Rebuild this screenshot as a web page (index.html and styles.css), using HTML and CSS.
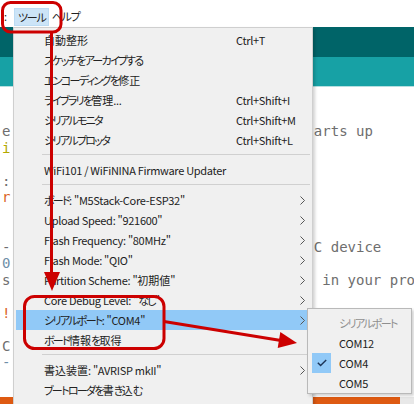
FILE: index.html
```html
<!DOCTYPE html>
<html lang="ja">
<head>
<meta charset="utf-8">
<title>Arduino IDE - ツール menu</title>
<link rel="stylesheet" href="styles.css">
</head>
<body>
<div class="screen">
  <div class="menubar">
    <span class="mb-item mb-cut">:</span>
    <span class="mb-item mb-active ja">ツール</span>
    <span class="mb-item ja">ヘルプ</span>
  </div>
  <div class="toolbar"></div>
  <div class="tabs"></div>
  <div class="editor">
    <div class="line"><span class="head c-blue"> </span></div>
    <div class="line"></div>
    <div class="line"><span class="head">e</span><span class="tail">arts up</span></div>
    <div class="line"><span class="head c-olive">i</span></div>
    <div class="line"></div>
    <div class="line"><span class="head">:</span></div>
    <div class="line"><span class="head c-orange">r</span></div>
    <div class="line"></div>
    <div class="line"></div>
    <div class="line"><span class="head">-</span><span class="tail">C device</span></div>
    <div class="line"><span class="head c-blue">0</span></div>
    <div class="line"><span class="head">s</span><span class="tail"> in your pro</span></div>
    <div class="line"></div>
    <div class="line"><span class="head c-orange">!</span></div>
    <div class="line"></div>
    <div class="line"><span class="head">C</span></div>
    <div class="line"><span class="head c-blue">-</span></div>
    <div class="line"></div>
  </div>
  <div class="status"><span class="status-end"></span></div>

  <div class="menu">
    <div class="mi"><span class="lbl kj">自動整形</span><span class="key">Ctrl+T</span></div>
    <div class="mi"><span class="lbl ja">スケッチをアーカイブする</span></div>
    <div class="mi"><span class="lbl"><span class="ja">エンコーディングを</span><span class="kj">修正</span></span></div>
    <div class="mi"><span class="lbl"><span class="ja">ライブラリを</span><span class="kj">管理</span>...</span><span class="key">Ctrl+Shift+I</span></div>
    <div class="mi"><span class="lbl ja">シリアルモニタ</span><span class="key">Ctrl+Shift+M</span></div>
    <div class="mi"><span class="lbl ja">シリアルプロッタ</span><span class="key">Ctrl+Shift+L</span></div>
    <div class="sep"></div>
    <div class="mi"><span class="lbl">WiFi101 / WiFiNINA Firmware Updater</span></div>
    <div class="sep"></div>
    <div class="mi"><span class="lbl"><span class="ja">ボード</span>: "M5Stack-Core-ESP32"</span><span class="key"></span><svg class="arr" viewBox="0 0 5 9"><polyline points="0.5,0.5 4.5,4.5 0.5,8.5"/></svg></div>
    <div class="mi"><span class="lbl">Upload Speed: "921600"</span><span class="key"></span><svg class="arr" viewBox="0 0 5 9"><polyline points="0.5,0.5 4.5,4.5 0.5,8.5"/></svg></div>
    <div class="mi"><span class="lbl">Flash Frequency: "80MHz"</span><span class="key"></span><svg class="arr" viewBox="0 0 5 9"><polyline points="0.5,0.5 4.5,4.5 0.5,8.5"/></svg></div>
    <div class="mi"><span class="lbl">Flash Mode: "QIO"</span><span class="key"></span><svg class="arr" viewBox="0 0 5 9"><polyline points="0.5,0.5 4.5,4.5 0.5,8.5"/></svg></div>
    <div class="mi"><span class="lbl">Partition Scheme: "<span class="kj">初期値</span>"</span><span class="key"></span><svg class="arr" viewBox="0 0 5 9"><polyline points="0.5,0.5 4.5,4.5 0.5,8.5"/></svg></div>
    <div class="mi"><span class="lbl">Core Debug Level: "<span class="ja">なし</span>"</span><span class="key"></span><svg class="arr" viewBox="0 0 5 9"><polyline points="0.5,0.5 4.5,4.5 0.5,8.5"/></svg></div>
    <div class="mi mi-active"><span class="lbl"><span class="ja">シリアルポート</span>: "COM4"</span><span class="key"></span><svg class="arr" viewBox="0 0 5 9"><polyline points="0.5,0.5 4.5,4.5 0.5,8.5"/></svg></div>
    <div class="mi"><span class="lbl"><span class="ja">ボード</span><span class="kj">情報</span><span class="ja">を</span><span class="kj">取得</span></span></div>
    <div class="sep"></div>
    <div class="mi"><span class="lbl"><span class="kj">書込装置</span>: "AVRISP mkII"</span><span class="key"></span><svg class="arr" viewBox="0 0 5 9"><polyline points="0.5,0.5 4.5,4.5 0.5,8.5"/></svg></div>
    <div class="mi"><span class="lbl"><span class="ja">ブートローダを</span><span class="kj">書</span><span class="ja">き</span><span class="kj">込</span><span class="ja">む</span></span></div>
  </div>

  <div class="submenu">
    <div class="si si-title"><span class="chk"></span><span class="slbl ja">シリアルポート</span></div>
    <div class="si"><span class="chk"></span><span class="slbl">COM12</span></div>
    <div class="si"><span class="chk chk-on"><svg viewBox="0 0 10 8"><polyline points="0.8,3.8 3.6,6.6 9.2,1"/></svg></span><span class="slbl">COM4</span></div>
    <div class="si"><span class="chk"></span><span class="slbl">COM5</span></div>
  </div>

  <svg class="marks" viewBox="0 0 414 404">
    <rect x="2.5" y="2.5" width="58.5" height="29.5" rx="8"/>
    <line x1="51.5" y1="33" x2="51.5" y2="274"/>
    <polygon points="44,272 60,272 52,291"/>
    <rect x="24.5" y="296.5" width="139.5" height="52" rx="10"/>
    <line x1="164" y1="321.5" x2="281" y2="340.5"/>
    <polygon points="297,343 280.3,332.1 277.7,347.9"/>
  </svg>
</div>
</body>
</html>
```

FILE: styles.css
```css
* { box-sizing: border-box; }

html, body {
  margin: 0;
  padding: 0;
  background: #ffffff;
}

.screen {
  position: relative;
  width: 414px;
  height: 404px;
  overflow: hidden;
  font-family: "Noto Sans CJK JP", "Noto Sans", sans-serif;
  font-feature-settings: "palt";
  color: #222;
}

/* Japanese runs: condensed kana, full-width kanji */
.ja {
  letter-spacing: -1.7px;
}
.kj {
  letter-spacing: 0;
}

/* menu bar */
.menubar {
  height: 27px;
  background: #ffffff;
  display: flex;
  align-items: flex-start;
  padding-top: 8px;
  font-size: 11px;
}
.menubar .ja {
  letter-spacing: -1.2px;
}
.mb-item {
  height: 18px;
  line-height: 17px;
  padding: 0 2px;
}
.mb-cut {
  width: 14px;
  padding-left: 4px;
}
.mb-active {
  padding: 0 2px 0 3px;
  margin-right: 1px;
  background: #cce4f7;
  border: 1px solid #bcdcf4;
}

/* IDE background */
.toolbar {
  height: 30px;
  background: #006468;
}
.tabs {
  height: 30px;
  background: #17a1a5;
  border-bottom: 1px solid #b6dfe0;
}
.editor {
  height: 310px;
  padding: 3px 0 0 2px;
  overflow: hidden;
  font-family: "DejaVu Sans Mono", monospace;
  font-size: 14px;
  color: #6e6e6e;
  font-feature-settings: normal;
}
.line {
  height: 16.5px;
  line-height: 16.5px;
  white-space: pre;
  display: grid;
  grid-template-columns: 37ch auto;
}
.head { grid-column: 1; }
.tail { grid-column: 2; }
.c-blue { color: #6f8fa8; }
.c-olive { color: #b3a800; }
.c-orange { color: #d9631e; }

.status {
  height: 10px;
  background: #de5a12;
  display: flex;
  justify-content: flex-end;
}
.status-end {
  width: 14px;
  background: #e8e8e8;
}

/* dropdown menu */
.menu {
  position: absolute;
  left: 13px;
  top: 27px;
  width: 300px;
  height: 390px;
  background: #f0f0f0;
  border: 1px solid #cfcfcf;
  box-shadow: 2px 2px 3px rgba(0, 0, 0, 0.18);
  padding-top: 2px;
  font-size: 11px;
  letter-spacing: -0.3px;
  display: flex;
  flex-direction: column;
}
.mi {
  height: 20px;
  margin: 0 2px;
  padding-left: 28px;
  display: grid;
  grid-template-columns: 192px 64px 10px;
  align-items: center;
  line-height: 20px;
  white-space: nowrap;
}
.mi-active {
  background: #91c9f7;
}
.key { color: #222; }
.arr {
  width: 5px;
  height: 9px;
  fill: none;
  stroke: #555;
  stroke-width: 1;
}
.sep {
  height: 10px;
  margin: 0 2px 0 28px;
  position: relative;
}
.sep::after {
  content: "";
  position: absolute;
  left: 0;
  right: 0;
  top: 4px;
  height: 1px;
  background: #d0d0d0;
}

/* submenu */
.submenu {
  position: absolute;
  left: 307px;
  top: 308px;
  width: 105px;
  height: 86px;
  background: #f0f0f0;
  border: 1px solid #b9b9b9;
  box-shadow: 2px 2px 3px rgba(0, 0, 0, 0.18);
  padding-top: 4px;
  font-size: 11px;
  letter-spacing: -0.2px;
}
.si {
  height: 20px;
  display: flex;
  align-items: center;
  padding-left: 4px;
}
.chk {
  width: 19px;
  height: 20px;
  display: flex;
  align-items: center;
  justify-content: center;
}
.chk-on {
  background: #91c9f7;
}
.chk svg {
  width: 10px;
  height: 8px;
  fill: none;
  stroke: #1d3557;
  stroke-width: 1.4;
}
.slbl {
  margin-left: 8px;
  white-space: nowrap;
}
.si-title .slbl { color: #8f8f8f; }

/* red annotations */
.marks {
  position: absolute;
  left: 0;
  top: 0;
  width: 414px;
  height: 404px;
  pointer-events: none;
}
.marks rect, .marks line {
  fill: none;
  stroke: #cc0000;
  stroke-width: 3;
}
.marks polygon {
  fill: #cc0000;
}
```
